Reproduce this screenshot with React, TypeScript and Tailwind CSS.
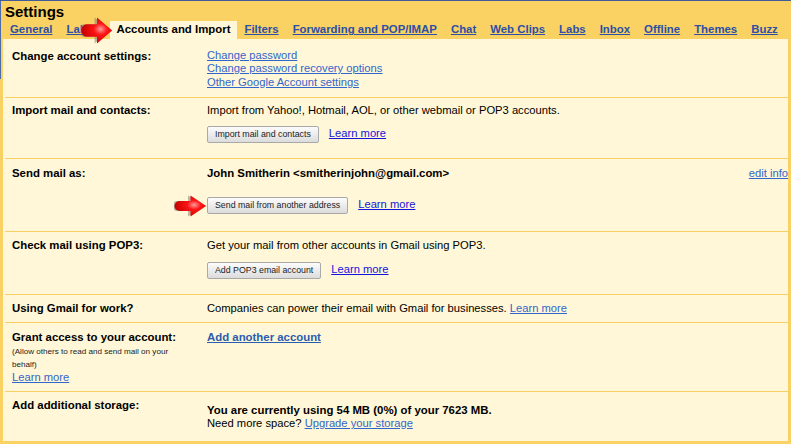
import React from 'react';

const tabs = [
  'General',
  'Labels',
  'Accounts and Import',
  'Filters',
  'Forwarding and POP/IMAP',
  'Chat',
  'Web Clips',
  'Labs',
  'Inbox',
  'Offline',
  'Themes',
  'Buzz',
];

const GButton = ({ children }: { children: React.ReactNode }) => (
  <button className="h-[17px] px-[7px] rounded-[2px] border border-[#a9a9a9] bg-linear-to-b from-[#fcfcfc] to-[#dcdcdc] text-[8.8px] leading-none text-[#222] whitespace-nowrap">
    {children}
  </button>
);

const Arrow = ({ className, id }: { className: string; id: string }) => (
  <svg viewBox="0 0 40 28" preserveAspectRatio="none" className={className}>
    <defs>
      <radialGradient id={id} cx="0.62" cy="0.45" r="0.62">
        <stop offset="0" stopColor="#ff9a9a" />
        <stop offset="0.35" stopColor="#ff1414" />
        <stop offset="1" stopColor="#c20000" />
      </radialGradient>
    </defs>
    <path d="M7 7.5 L20 7.5 L20 0.5 L39 14 L20 27.5 L20 20.5 L7 20.5 A6.5 6.5 0 0 1 7 7.5 Z" fill="#7d7d7d" opacity="0.55" transform="translate(-3 0)" />
    <path d="M7 7.5 L20 7.5 L20 0.5 L39 14 L20 27.5 L20 20.5 L7 20.5 A6.5 6.5 0 0 1 7 7.5 Z" fill={`url(#${id})`} />
  </svg>
);

const Row = ({
  h,
  pt,
  label,
  children,
  last,
}: {
  h: string;
  pt: string;
  label: React.ReactNode;
  children: React.ReactNode;
  last?: boolean;
}) => (
  <div className={`flex ${h} ${last ? '' : 'border-b border-[#f7cf66]'}`}>
    <div className={`w-[202px] shrink-0 pl-[7px] ${pt}`}>{label}</div>
    <div className={`flex-1 ${pt}`}>{children}</div>
  </div>
);

const Label = ({ children }: { children: React.ReactNode }) => (
  <div className="text-[11.4px] font-bold leading-[13px]">{children}</div>
);

export default function App() {
  return (
    <div className="relative w-[791px] h-[444px] overflow-hidden bg-[#fad163] border-t border-[#3d5c99] font-['Liberation_Sans',Arial,sans-serif] text-black">
      <div className="h-[20px] pl-[5px] pt-px text-[15px] font-bold leading-[20px]">Settings</div>

      <div className="flex h-[18px] pl-[3px] whitespace-nowrap text-[11.4px] font-bold">
        {tabs.map((t) =>
          t === 'Accounts and Import' ? (
            <div key={t} className="flex h-full shrink-0 items-center bg-[#fff7d7] px-[7px]">
              {t}
            </div>
          ) : (
            <a key={t} className="flex h-full shrink-0 items-center px-[7px] text-[#2d4fa5] underline">
              {t}
            </a>
          )
        )}
      </div>

      <div className="h-[405px] border-x-[3px] border-b-[3px] border-[#fad163] bg-[#fff7d7] pl-[2px] text-[11.2px] leading-[13px]">
        <Row h="h-[59px]" pt="pt-[11px]" label={<Label>Change account settings:</Label>}>
          <div className="-mt-px flex flex-col items-start leading-[13.3px] text-[#3366cc] underline">
            <a>Change password</a>
            <a>Change password recovery options</a>
            <a>Other Google Account settings</a>
          </div>
        </Row>

        <Row h="h-[61px]" pt="pt-[6px]" label={<Label>Import mail and contacts:</Label>}>
          <div>Import from Yahoo!, Hotmail, AOL, or other webmail or POP3 accounts.</div>
          <div className="mt-[9px] flex items-center gap-[10px]">
            <GButton>Import mail and contacts</GButton>
            <a className="text-[#1414dd] underline -mt-[2px]">Learn more</a>
          </div>
        </Row>

        <Row h="h-[73px]" pt="pt-[8px]" label={<Label>Send mail as:</Label>}>
          <div className="flex justify-between">
            <span className="text-[11.4px] font-bold">John Smitherin &lt;smitherinjohn@gmail.com&gt;</span>
            <a className="text-[#3366cc] underline">edit info</a>
          </div>
          <div className="mt-[17px] flex items-center gap-[10px]">
            <GButton>Send mail from another address</GButton>
            <a className="text-[#1414dd] underline -mt-[2px]">Learn more</a>
          </div>
        </Row>

        <Row h="h-[63px]" pt="pt-[7px]" label={<Label>Check mail using POP3:</Label>}>
          <div>Get your mail from other accounts in Gmail using POP3.</div>
          <div className="mt-[10px] flex items-center gap-[10px]">
            <GButton>Add POP3 email account</GButton>
            <a className="text-[#1414dd] underline -mt-[2px]">Learn more</a>
          </div>
        </Row>

        <Row h="h-[28px]" pt="pt-[7px]" label={<Label>Using Gmail for work?</Label>}>
          <div>
            Companies can power their email with Gmail for businesses.{' '}
            <a className="text-[#3366cc] underline">Learn more</a>
          </div>
        </Row>

        <Row
          h="h-[69px]"
          pt="pt-[8px]"
          label={
            <div>
              <Label>Grant access to your account:</Label>
              <div className="mt-[2px] w-[176px] text-[8.1px] leading-[12.7px] text-[#222]">
                (Allow others to read and send mail on your behalf)
              </div>
              <a className="text-[#3366cc] underline">Learn more</a>
            </div>
          }
        >
          <a className="text-[11.4px] font-bold text-[#2a5db0] underline">Add another account</a>
        </Row>

        <Row h="h-[49px]" pt="pt-[7px]" last label={<Label>Add additional storage:</Label>}>
          <div className="mt-[5px]">
            <div className="text-[11.4px] font-bold">You are currently using 54 MB (0%) of your 7623 MB.</div>
            <div>
              Need more space? <a className="text-[#3366cc] underline">Upgrade your storage</a>
            </div>
          </div>
        </Row>
      </div>

      <div className="absolute left-0 top-0 h-[78px] w-px bg-[#4a6aa8]" />
      <Arrow id="arrowA" className="absolute left-[81px] top-[16px] h-[27px] w-[32px]" />
      <Arrow id="arrowB" className="absolute left-[174px] top-[194px] h-[22px] w-[33px]" />
    </div>
  );
}
